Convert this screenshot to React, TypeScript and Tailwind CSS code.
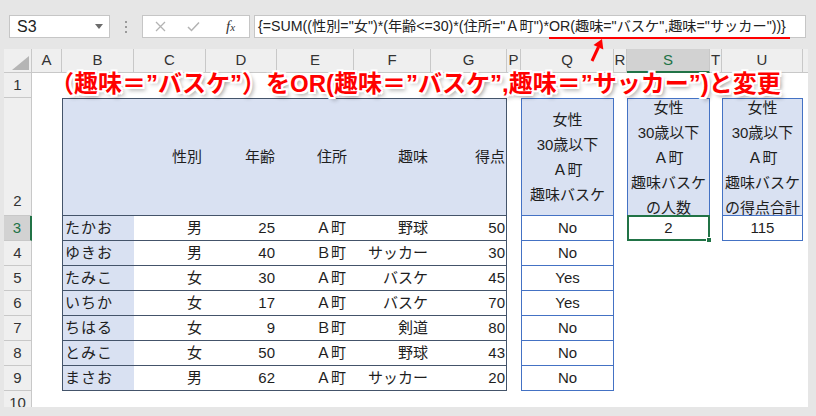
import React from "react";

const rows = [
  { n: "たかお", g: "男", a: "25", ad: "Ａ町", h: "野球", s: "50", q: "No" },
  { n: "ゆきお", g: "男", a: "40", ad: "Ｂ町", h: "サッカー", s: "30", q: "No" },
  { n: "たみこ", g: "女", a: "30", ad: "Ａ町", h: "バスケ", s: "45", q: "Yes" },
  { n: "いちか", g: "女", a: "17", ad: "Ａ町", h: "バスケ", s: "70", q: "Yes" },
  { n: "ちはる", g: "女", a: "9", ad: "Ｂ町", h: "剣道", s: "80", q: "No" },
  { n: "とみこ", g: "女", a: "50", ad: "Ａ町", h: "野球", s: "43", q: "No" },
  { n: "まさお", g: "男", a: "62", ad: "Ａ町", h: "サッカー", s: "20", q: "No" },
];

const colHeads: { l: string; w: string; sel?: boolean }[] = [
  { l: "A", w: "w-[30px]" },
  { l: "B", w: "w-[72px]" },
  { l: "C", w: "w-[72px]" },
  { l: "D", w: "w-[71px]" },
  { l: "E", w: "w-[77px]" },
  { l: "F", w: "w-[77px]" },
  { l: "G", w: "w-[76px]" },
  { l: "P", w: "w-[14px]" },
  { l: "Q", w: "w-[93px]" },
  { l: "R", w: "w-[13px]" },
  { l: "S", w: "w-[83px]", sel: true },
  { l: "T", w: "w-[12px]" },
  { l: "U", w: "w-[81px]" },
];

function ColHeader() {
  return (
    <div className="flex h-[24px] pl-[4px]">
      <div className="w-[28px] h-full bg-[#efefef] border-r border-b border-[#c8c8c8] flex items-end justify-end pr-[2px] pb-[2px]">
        <svg width="17" height="14" viewBox="0 0 17 14">
          <polygon points="17,0 17,14 0,14" fill="#b5b5b5" />
        </svg>
      </div>
      {colHeads.map((c) =>
        c.sel ? (
          <div
            key={c.l}
            className={`${c.w} h-full bg-[#d2d2d2] border-r border-[#c8c8c8] border-b-2 border-b-[#217346] flex items-center justify-center text-[15px] text-[#217346]`}
          >
            {c.l}
          </div>
        ) : (
          <div
            key={c.l}
            className={`${c.w} h-full bg-[#efefef] border-r border-b border-[#c8c8c8] flex items-center justify-center text-[15px] text-[#333]`}
          >
            {c.l}
          </div>
        )
      )}
      <div className="w-[5px] h-full bg-[#efefef] border-b border-[#c8c8c8]" />
    </div>
  );
}

function RowHeader() {
  const cell =
    "w-full bg-[#efefef] border-r border-b border-[#c8c8c8] flex justify-center text-[15px] text-[#333]";
  return (
    <div className="w-[28px] flex flex-col">
      <div className={`${cell} h-[25px] items-center`}>1</div>
      <div className={`${cell} h-[118px] items-end pb-[3px]`}>2</div>
      <div className="w-full h-[25px] bg-[#d2d2d2] border-b border-[#c8c8c8] border-r-2 border-r-[#217346] flex items-center justify-center text-[15px] text-[#217346]">
        3
      </div>
      {["4", "5", "6", "7", "8", "9"].map((n) => (
        <div key={n} className={`${cell} h-[25px] items-center`}>
          {n}
        </div>
      ))}
      <div className="w-full h-[16px] overflow-hidden bg-[#efefef] border-r border-[#c8c8c8]">
        <div className="h-[25px] flex items-center justify-center text-[15px] text-[#333]">10</div>
      </div>
    </div>
  );
}

const tcols = "grid grid-cols-[71px_72px_71px_77px_77px_1fr]";

function MainTable() {
  return (
    <div className="col-start-2 col-span-6 row-start-2 row-span-8 border border-[#44546a] flex flex-col">
      <div className={`flex-1 ${tcols} items-center bg-[#d9e1f2] text-[15px]`}>
        <div />
        <div className="text-right pr-[4px]">性別</div>
        <div className="text-right pr-[2px]">年齢</div>
        <div className="text-right pr-[7px]">住所</div>
        <div className="text-right pr-[3px]">趣味</div>
        <div className="text-right pr-[1px]">得点</div>
      </div>
      {rows.map((r) => (
        <div key={r.n} className={`h-[25px] ${tcols} items-center border-t border-[#44546a] text-[15px]`}>
          <div className="h-full bg-[#d9e1f2] flex items-center pl-[2px] tracking-[1px]">{r.n}</div>
          <div className="text-right pr-[4px]">{r.g}</div>
          <div className="text-right pr-[2px]">{r.a}</div>
          <div className="text-right pr-[8px]">{r.ad}</div>
          <div className="text-right pr-[3px]">{r.h}</div>
          <div className="text-right pr-[1px]">{r.s}</div>
        </div>
      ))}
    </div>
  );
}

function QTable() {
  return (
    <div className="col-start-9 row-start-2 row-span-8 border border-[#4472c4] flex flex-col">
      <div className="flex-1 bg-[#d9e1f2] flex flex-col items-center justify-center leading-[25px] text-[15px]">
        <div>女性</div>
        <div>30歳以下</div>
        <div>Ａ町</div>
        <div>趣味バスケ</div>
      </div>
      {rows.map((r) => (
        <div key={r.n} className="h-[25px] border-t border-[#4472c4] flex items-center justify-center text-[15px]">
          {r.q}
        </div>
      ))}
    </div>
  );
}

function SumTable({ last, value, selected, pos }: { last: string; value: string; selected?: boolean; pos: string }) {
  return (
    <div className={`${pos} row-start-2 row-span-2 flex flex-col`}>
      <div className="flex-1 min-h-0 bg-[#d9e1f2] border border-[#4472c4] flex flex-col items-center justify-center leading-[25px] text-[15px]">
        <div>女性</div>
        <div>30歳以下</div>
        <div>Ａ町</div>
        <div>趣味バスケ</div>
        <div>{last}</div>
      </div>
      <div className="relative h-[25px] border-x border-b border-[#4472c4] flex items-center justify-center text-[15px]">
        {value}
        {selected && (
          <>
            <div className="absolute -left-[1px] -right-[1px] -top-[1px] -bottom-[1px] border-2 border-[#217346]" />
            <div className="absolute -right-[3px] -bottom-[3px] w-[6px] h-[6px] bg-[#217346] border border-white" />
          </>
        )}
      </div>
    </div>
  );
}

export default function App() {
  return (
    <div className="relative w-[816px] h-[416px] overflow-hidden bg-[#e6e6e6] text-[#1e1e1e] [font-family:'Liberation_Sans','Noto_Sans_CJK_JP',sans-serif]">
      {/* toolbar */}
      <div className="h-[49px] flex items-start pt-[15px] pl-[9px]">
        <div className="w-[101px] h-[23px] bg-white border border-[#c6c6c6] flex items-center justify-between pl-[7px] pr-[6px] text-[16px] text-[#222]">
          <span>S3</span>
          <svg width="8" height="5" viewBox="0 0 8 5">
            <polygon points="0,0 8,0 4,5" fill="#6b6b6b" />
          </svg>
        </div>
        <div className="w-[32px] h-[23px] flex flex-col items-center justify-center gap-[3px]">
          <div className="w-[2px] h-[2px] bg-[#9a9a9a]" />
          <div className="w-[2px] h-[2px] bg-[#9a9a9a]" />
          <div className="w-[2px] h-[2px] bg-[#9a9a9a]" />
        </div>
        <div className="w-[108px] h-[23px] bg-white border border-[#c6c6c6] flex items-center">
          <div className="w-[35px] flex justify-center">
            <svg width="11" height="11" viewBox="0 0 11 11">
              <path d="M1 1 L10 10 M10 1 L1 10" stroke="#b3b3b3" strokeWidth="1.3" />
            </svg>
          </div>
          <div className="w-[30px] flex justify-center">
            <svg width="13" height="11" viewBox="0 0 13 11">
              <path d="M1 6 L4.5 9.5 L12 1.5" stroke="#b3b3b3" strokeWidth="1.5" fill="none" />
            </svg>
          </div>
          <div className="flex-1 flex justify-center pl-[4px]">
            <span className="italic text-[15px] text-[#333] [font-family:'Liberation_Serif',serif]">
              f<span className="text-[11px]">x</span>
            </span>
          </div>
        </div>
        <div className="ml-[4px] w-[552px] h-[23px] bg-white border border-[#c6c6c6] flex items-center pl-[3px] text-[14.2px] text-[#222] whitespace-nowrap overflow-hidden">
          {'{=SUM((性別="女")*(年齢<=30)*(住所="Ａ町")*OR(趣味="バスケ",趣味="サッカー"))}'}
        </div>
      </div>

      <ColHeader />

      <div className="flex pl-[4px]">
        <RowHeader />
        <div className="bg-white grid grid-cols-[30px_72px_72px_71px_77px_77px_76px_14px_93px_13px_83px_12px_81px_5px] grid-rows-[25px_118px_25px_25px_25px_25px_25px_25px_25px_16px]">
          <MainTable />
          <QTable />
          <SumTable pos="col-start-11" last="の人数" value="2" selected />
          <SumTable pos="col-start-13" last="の得点合計" value="115" />
        </div>
      </div>

      {/* annotation */}
      <div className="absolute left-[50px] top-[72px] text-[24px] font-bold leading-none text-[#ff0000] whitespace-nowrap [text-shadow:2px_0_0_#fff,-2px_0_0_#fff,0_2px_0_#fff,0_-2px_0_#fff,2px_2px_0_#fff,-2px_-2px_0_#fff,2px_-2px_0_#fff,-2px_2px_0_#fff,3px_3px_4px_rgba(0,0,0,0.45)]">
        （趣味＝”バスケ”）をOR(趣味＝”バスケ”,趣味＝”サッカー”)と変更
      </div>

      <svg className="absolute left-[545px] top-[34px] pointer-events-none" width="250" height="30" viewBox="0 0 250 30">
        <line x1="4" y1="4" x2="245" y2="4" stroke="#ff0000" strokeWidth="2" />
        <line x1="47" y1="27" x2="53.5" y2="13" stroke="#ff0000" strokeWidth="3" />
        <polygon points="57,5 58.3,15.5 48.5,11" fill="#ff0000" />
      </svg>
    </div>
  );
}
